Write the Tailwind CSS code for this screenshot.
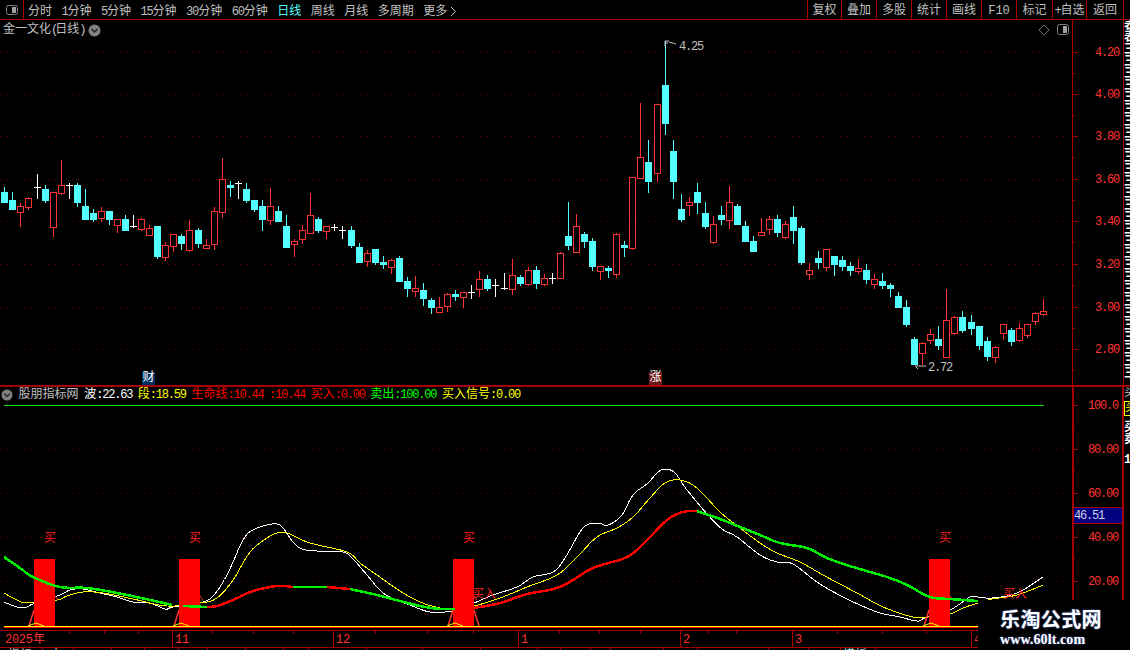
<!DOCTYPE html>
<html lang="zh-CN">
<head>
  <meta charset="UTF-8" />
  <title>金一文化(日线)</title>
  <script src="https://cdn.jsdelivr.net/npm/@tailwindcss/browser@4"></script>
</head>
<body class="bg-black">
  <div class="relative w-[1130px] h-[650px] overflow-hidden bg-black flex flex-col text-[12px] leading-[14px] text-[#c0c0c0] [font-family:'Liberation_Mono','Noto_Sans_CJK_SC',monospace]">

    <!-- 顶部周期栏 -->
    <div class="h-[20px] shrink-0 flex items-center border-b border-[#a80000]">
      <div class="w-[24px] h-full flex items-center justify-center border-r border-[#a80000]">
        <svg width="14" height="12" viewBox="0 0 14 12"><rect x="1.5" y="1.5" width="11" height="9" rx="2" fill="#000" stroke="#808080"/><rect x="7" y="3" width="4" height="6" fill="#a0a0a0"/></svg>
      </div>
      <div class="flex items-center gap-[9.5px] ml-[4px] translate-y-[2px]">
        <span>分时</span>
        <span><span class="tracking-[-1.2px]">1</span>分钟</span>
        <span><span class="tracking-[-1.2px]">5</span>分钟</span>
        <span><span class="tracking-[-1.2px]">15</span>分钟</span>
        <span><span class="tracking-[-1.2px]">30</span>分钟</span>
        <span><span class="tracking-[-1.2px]">60</span>分钟</span>
        <span class="text-[#54ffff]">日线</span>
        <span>周线</span>
        <span>月线</span>
        <span>多周期</span>
        <span class="flex items-center gap-[3px]">更多
          <svg width="7" height="11" viewBox="0 0 7 11" fill="none" stroke="#c0c0c0"><path d="M1 1l4.500 4.500L1 10"/></svg>
        </span>
      </div>
      <div class="ml-auto flex h-full mr-[6px] text-center">
        <div class="w-[34px] border-l border-[#a80000] leading-[23px]">复权</div>
        <div class="w-[35px] border-l border-[#a80000] leading-[23px]">叠加</div>
        <div class="w-[35px] border-l border-[#a80000] leading-[23px]">多股</div>
        <div class="w-[35px] border-l border-[#a80000] leading-[23px]">统计</div>
        <div class="w-[35px] border-l border-[#a80000] leading-[23px]">画线</div>
        <div class="w-[35px] border-l border-[#a80000] leading-[23px]">F10</div>
        <div class="w-[36px] border-l border-[#a80000] leading-[23px]">标记</div>
        <div class="w-[34px] border-l border-[#a80000] leading-[23px] whitespace-nowrap"><span class="tracking-[-1.2px]">+</span>自选</div>
        <div class="w-[38px] border-x border-[#a80000] leading-[23px]">返回</div>
      </div>
    </div>

    <!-- K线主图 -->
    <div class="h-[365px] shrink-0 flex">
      <div class="relative w-[1072px] shrink-0">
        <svg id="kline" class="absolute inset-0" width="1072" height="365" viewBox="0 20 1072 365"></svg>
        <div class="absolute left-[3px] top-[3px] flex items-center gap-[5px]">
          <span class="whitespace-nowrap">金一文化<span class="tracking-[-3px]">(</span>日线<span class="tracking-[-3px]">)</span></span>
          <svg width="13" height="13" viewBox="0 0 13 13"><circle cx="6.500" cy="6.500" r="6" fill="#808080"/><path d="M3.500 5l3 3 3-3" fill="none" stroke="#222" stroke-width="1.500"/></svg>
        </div>
        <svg class="absolute left-[1038px] top-[4px]" width="32" height="12" viewBox="0 0 32 12" fill="none">
          <path d="M6 1l5 5-5 5-5-5z" stroke="#707070"/>
          <rect x="19.500" y="0.500" width="11" height="10" rx="2" stroke="#808080"/>
          <rect x="25" y="2" width="4" height="7" fill="#a0a0a0"/>
        </svg>
        <div class="absolute left-[142px] top-[352px] w-[13px] h-[13px] bg-[#003060] text-white leading-[13px] text-center">财</div>
        <div class="absolute left-[649px] top-[352px] w-[13px] h-[13px] bg-[#701818] text-white leading-[13px] text-center">涨</div>
      </div>
      <div class="w-[51px] shrink-0 border-l border-[#a80000]">
        <svg id="axisTop" width="50" height="365" viewBox="1073 20 50 365"></svg>
      </div>
      <div class="w-[7px] shrink-0 border-l border-[#a80000] overflow-hidden text-white font-bold">
        <div class="h-[24px] border-b border-[#a80000] overflow-hidden leading-[12px] w-[12px]">表表</div>
        <div class="leading-[12px] w-[12px]">三三三三三三三三三三三三三三三三三三三三三三三三三三三三</div>
      </div>
    </div>

    <!-- 副图指标 -->
    <div class="h-[245px] shrink-0 flex border-t-2 border-[#a80000]">
      <div class="relative w-[1072px] shrink-0">
        <svg id="indicator" class="absolute inset-0" width="1072" height="243" viewBox="0 387 1072 243"></svg>
        <div class="absolute left-[1px] top-[1px] flex items-center gap-[5.6px] whitespace-nowrap">
          <svg width="12" height="12" viewBox="0 0 13 13"><circle cx="6.500" cy="6.500" r="6" fill="#808080"/><path d="M3.500 5l3 3 3-3" fill="none" stroke="#222" stroke-width="1.500"/></svg>
          <span>股朋指标网</span>
          <span class="text-white">波<span class="tracking-[-1.2px]">:22.63</span></span>
          <span class="text-[#ffff00]">段<span class="tracking-[-1.2px]">:18.59</span></span>
          <span class="text-[#ff0000]">生命线<span class="tracking-[-1.2px]">:10.44</span></span>
          <span class="text-[#ff0000] tracking-[-1.2px]">:10.44</span>
          <span class="text-[#ff0000]">买入<span class="tracking-[-1.2px]">:0.00</span></span>
          <span class="text-[#00ff00]">卖出<span class="tracking-[-1.2px]">:100.00</span></span>
          <span class="text-[#ffff00]">买入信号<span class="tracking-[-1.2px]">:0.00</span></span>
        </div>
      </div>
      <div class="w-[50px] shrink-0 border-l-2 border-[#a80000]">
        <svg id="axisBottom" width="48" height="243" viewBox="1074 387 48 243"></svg>
      </div>
      <div class="w-[8px] shrink-0 border-l-2 border-[#a80000] overflow-hidden leading-[12px]">
        <div class="w-[12px]">买</div>
        <div class="w-[12px] h-[15px] border border-[#ffff00] text-[#ffff00] mt-[2px]">买</div>
        <div class="w-[12px] text-white font-bold mt-[6px]">买卖</div>
        <div class="w-[12px] text-white font-bold mt-[8px]">18</div>
      </div>
    </div>

    <!-- 时间轴 -->
    <svg id="timeAxis" class="shrink-0" width="1130" height="20" viewBox="0 630 1130 20"></svg>

    <!-- 水印 -->
    <div class="absolute right-0 bottom-0 w-[152px] h-[50px] bg-black flex flex-col pl-[22px] pt-[7px] text-white whitespace-nowrap">
      <div class="text-[20px] leading-[24px] font-bold tracking-[0.4px] [font-family:'Noto_Sans_CJK_SC',sans-serif] [text-shadow:0_0_2px_#5070d0]">乐淘公式网</div>
      <div class="text-[14px] leading-[18px] font-bold tracking-[0.1px] [font-family:'Liberation_Serif',serif] [text-shadow:0_0_2px_#5070d0]">www.60lt.com</div>
    </div>
  </div>

  <script>
    const RED = "#ff3232", CYAN = "#54ffff", LINE = "#a80000", DOT = "#700000";
    const MONO = "font-family=\"'Liberation Mono',monospace\" font-size=\"12\" letter-spacing=\"-1.2\"";
    const CJK = "font-family=\"'Noto Sans CJK SC',sans-serif\" font-size=\"12\"";

    // 类型 c阳线实心 r空心 w十字, 上影 实体上 实体下 下影
    const candles = [
      ["c",187,192,202,202],["c",192,200,209,209],["r",203,206,212,226],["r",197,198,207,209],["w",174,187,187,198],
      ["c",185,189,200,202],["r",192,192,227,236],["r",160,185,193,194],["w",183,185,185,198],["c",183,185,202,206],
      ["c",189,206,219,219],["c",209,213,219,221],["r",207,211,218,221],["c",211,211,219,224],["r",219,219,225,232],
      ["c",215,219,230,230],["w",215,226,226,227],["r",218,219,229,230],["r",225,228,235,235],["c",226,226,256,258],
      ["r",242,245,257,260],["r",234,234,246,251],["c",234,236,243,249],["r",220,230,250,251],["c",228,230,243,247],
      ["r",239,245,248,248],["r",207,211,244,249],["r",158,179,212,217],["c",181,185,187,196],["w",181,183,183,198],
      ["c",183,189,200,202],["c",200,200,209,211],["c",200,206,219,230],["r",188,206,220,224],["c",206,211,221,221],
      ["c",215,226,247,247],["r",239,241,244,256],["r",225,230,239,243],["r",193,215,233,233],["c",217,219,230,232],
      ["r",226,226,231,238],["w",224,227,227,230],["w",226,230,230,238],["c",226,230,245,247],["c",243,247,262,262],
      ["r",250,253,261,266],["c",249,249,262,264],["c",256,262,264,268],["r",259,260,267,273],["c",256,258,281,281],
      ["c",277,281,288,296],["r",276,288,291,296],["c",283,290,298,305],["c",298,300,307,313],["r",297,307,312,312],
      ["r",293,294,306,311],["c",290,294,296,300],["r",292,292,297,307],["w",285,292,292,298],["r",271,279,289,296],
      ["c",275,279,288,290],["w",279,285,285,296],["w",273,288,288,289],["r",259,275,289,294],["c",275,277,283,285],
      ["r",267,270,284,285],["c",266,270,283,288],["r",274,278,284,285],["w",273,278,278,283],["r",252,253,278,278],
      ["c",202,236,245,249],["r",214,226,252,252],["c",232,234,241,247],["c",238,241,266,270],["r",266,266,271,279],
      ["c",266,268,270,277],["r",233,234,274,277],["c",241,245,247,256],["r",177,177,248,249],["r",103,157,178,178],
      ["c",140,162,181,192],["r",104,104,173,181],["c",41,85,123,134],["c",140,151,181,198],["c",194,209,219,221],
      ["r",197,202,205,215],["c",183,192,202,213],["c",202,213,226,228],["r",216,224,242,243],["c",206,215,219,224],
      ["r",186,202,220,228],["c",204,206,224,224],["c",221,226,241,241],["c",236,241,251,251],["r",218,232,235,235],
      ["r",216,219,229,234],["c",215,219,232,236],["r",221,224,237,238],["c",206,217,230,243],["c",226,228,262,264],
      ["r",263,270,274,279],["c",251,258,262,268],["r",249,249,267,270],["c",256,256,264,275],["c",256,260,266,270],
      ["c",262,266,270,275],["r",259,268,271,273],["c",264,270,279,283],["r",274,279,284,288],["c",273,281,285,288],
      ["c",283,285,288,296],["c",292,296,307,307],["c",300,307,324,326],["c",337,339,364,364],["r",342,343,353,364],
      ["r",329,334,340,343],["c",326,339,345,349],["r",289,320,357,357],["r",316,317,333,334],["c",311,317,330,332],
      ["c",315,322,328,334],["c",326,326,345,349],["c",337,341,356,360],["r",346,347,357,362],["r",324,324,333,339],
      ["c",328,330,341,345],["r",323,328,340,341],["r",324,324,335,337],["r",312,313,321,324],["r",299,311,314,315]
    ];

    function dotted(y) {
      return `<line x1="0" x2="1072" y1="${y + 0.5}" y2="${y + 0.5}" stroke="${DOT}" stroke-dasharray="1 5"/>`;
    }

    let k = "";
    [52, 94, 136, 179, 221, 264, 307, 349].forEach(y => k += dotted(y));
    candles.forEach((c, i) => {
      const x = Math.round(4.3 + 8.052 * i);
      const [t, hi, top, bot, lo] = c;
      const col = t === "r" ? RED : t === "w" ? "#ffffff" : CYAN;
      k += `<rect x="${x}" y="${hi}" width="1" height="${lo - hi + 1}" fill="${col}"/>`;
      if (t === "c") k += `<rect x="${x - 3}" y="${top}" width="7" height="${bot - top + 1}" fill="${col}"/>`;
      if (t === "r") k += `<rect x="${x - 2.5}" y="${top + 0.5}" width="6" height="${bot - top}" fill="#000" stroke="${col}"/>`;
      if (t === "w") k += `<rect x="${x - 3}" y="${top}" width="7" height="1" fill="${col}"/>`;
    });
    k += `<path d="M665 46V41h4M665 43h3M669 42l7 2" fill="none" stroke="#c0c0c0"/>`;
    k += `<text x="679" y="50" fill="#c0c0c0" ${MONO}>4.25</text>`;
    k += `<path d="M926 366H915l3 3" fill="none" stroke="#c0c0c0"/>`;
    k += `<text x="928" y="371" fill="#c0c0c0" ${MONO}>2.72</text>`;
    document.getElementById("kline").innerHTML = k;

    let a = "";
    [["4.20",52],["4.00",94],["3.80",136],["3.60",179],["3.40",221],["3.20",264],["3.00",307],["2.80",349]].forEach(([t, y]) => {
      a += `<rect x="1073" y="${y}" width="5" height="1" fill="${LINE}"/>`;
      a += `<rect x="1073" y="${y + 21}" width="2" height="1" fill="${LINE}"/>`;
      a += `<text x="1095" y="${y + 4}" fill="${RED}" ${MONO}>${t}</text>`;
    });
    document.getElementById("axisTop").innerHTML = a;

    const white = [[4,602],[17,607],[27,607],[33,604],[60,595],[70,590],[83,589],[100,593],[117,597],[133,602],[150,603],[165,609],[173,607],[200,603],[213,596],[227,575],[243,540],[253,530],[267,525],[277,524],[283,528],[293,542],[302,549],[317,551],[343,552],[353,559],[367,575],[383,593],[400,601],[410,605],[430,612],[452,611],[474,603],[493,595],[517,587],[533,577],[553,572],[565,558],[583,528],[597,523],[608,525],[622,515],[633,495],[648,483],[657,473],[665,469],[675,473],[687,490],[708,515],[722,529],[737,537],[760,555],[777,562],[793,564],[817,582],[843,597],[877,612],[900,617],[917,621],[925,618],[950,610],[970,597],[978,597],[992,598],[1017,593],[1043,577]];
    const yellow = [[4,593],[17,600],[28,603],[57,600],[67,596],[83,592],[103,593],[133,599],[167,606],[200,603],[217,598],[233,580],[250,552],[267,538],[277,533],[287,533],[310,543],[347,552],[360,563],[377,575],[400,591],[420,602],[440,608],[453,609],[474,606],[500,598],[527,587],[557,575],[577,557],[597,537],[617,528],[633,517],[650,498],[665,483],[680,480],[697,488],[720,512],[740,528],[760,543],[777,553],[800,562],[823,575],[857,593],[883,607],[913,617],[927,617],[950,614],[963,608],[978,603],[992,599],[1017,595],[1043,585]];
    const lifeSegs = [
      ["#00f000",[[4,557],[20,568],[33,577],[60,587],[87,588],[117,593],[150,600],[172,605]]],
      ["#00f000",[[183,606],[207,607]]],
      ["#ff0000",[[207,607],[217,606],[233,600],[253,591],[277,586],[293,587]]],
      ["#00f000",[[293,587],[327,587]]],
      ["#ff0000",[[327,587],[350,589]]],
      ["#00f000",[[350,589],[377,595],[400,601],[420,606],[440,609],[455,609]]],
      ["#ff0000",[[474,608],[500,603],[527,594],[560,587],[593,568],[627,557],[647,540],[667,520],[683,512],[697,511]]],
      ["#00f000",[[697,511],[720,519],[740,527],[760,535],[780,543],[807,548],[827,558],[853,567],[887,577],[907,585],[930,597],[950,599],[978,601]]]
    ];

    // 曲线平滑: Catmull-Rom 取样
    function smooth(p) {
      if (p.length < 3) return p.map(q => q.join(",")).join(" ");
      const out = [];
      for (let i = 0; i < p.length - 1; i++) {
        const p0 = p[i - 1] || p[i], p1 = p[i], p2 = p[i + 1], p3 = p[i + 2] || p2;
        for (let j = 0; j < 6; j++) {
          const t = j / 6, t2 = t * t, t3 = t2 * t;
          const f = n => 0.5 * (2 * p1[n] + (p2[n] - p0[n]) * t + (2 * p0[n] - 5 * p1[n] + 4 * p2[n] - p3[n]) * t2 + (3 * p1[n] - p0[n] - 3 * p2[n] + p3[n]) * t3);
          out.push(f(0).toFixed(1) + "," + f(1).toFixed(1));
        }
      }
      out.push(p[p.length - 1].join(","));
      return out.join(" ");
    }

    let s = "";
    [449, 493, 537, 581].forEach(y => s += dotted(y));
    s += `<rect x="4" y="405" width="1040" height="1" fill="#00e000"/>`;
    s += `<polyline points="${smooth(white)}" fill="none" stroke="#ffffff" shape-rendering="crispEdges"/>`;
    s += `<polyline points="${smooth(yellow)}" fill="none" stroke="#ffff00" shape-rendering="crispEdges"/>`;
    // 买入柱和信号线
    [34, 179, 453, 929].forEach(x => {
      s += `<rect x="${x}" y="559" width="21" height="67" fill="#ff0000"/>`;
      s += `<polyline points="${x - 5},626 ${x},610" fill="none" stroke="${RED}" stroke-width="1.500"/>`;
      s += `<polyline points="${x + 21},596 ${x + 24},600" fill="none" stroke="${RED}"/>`;
      s += `<text x="${x + 10}" y="542" fill="#ff2020" ${CJK}>买</text>`;
    });
    lifeSegs.forEach(([c, p]) => s += `<polyline points="${smooth(p)}" fill="none" stroke="${c}" stroke-width="2.5" shape-rendering="crispEdges"/>`);
    s += `<polyline points="474,610 479,626" fill="none" stroke="${RED}" stroke-width="1.500"/>`;
    s += `<text x="472" y="598" fill="#ff2020" ${CJK}>买入</text>`;
    s += `<text x="1003" y="598" fill="#ff2020" ${CJK}>买入</text>`;
    s += `<rect x="4" y="627" width="1068" height="1" fill="#ff0000"/>`;
    s += `<rect x="4" y="626" width="1068" height="1" fill="#ffff00"/>`;
    [34, 179, 453, 929].forEach(x => s += `<polyline points="${x - 6},626 ${x + 2},623 ${x + 10},626" fill="none" stroke="#ffff00"/>`);
    document.getElementById("indicator").innerHTML = s;

    let b = "";
    [["100.0",405],["80.00",449],["60.00",493],["40.00",537],["20.00",581]].forEach(([t, y]) => {
      b += `<rect x="1074" y="${y}" width="4" height="1" fill="${LINE}"/>`;
      b += `<rect x="1074" y="${y + 22}" width="1" height="1" fill="${LINE}"/>`;
      b += `<text x="1088" y="${y + 4}" fill="${RED}" ${MONO}>${t}</text>`;
    });
    b += `<rect x="1074" y="507" width="48" height="16" fill="#000080"/>`;
    b += `<rect x="1074" y="507" width="48" height="1" fill="${LINE}"/><rect x="1074" y="523" width="48" height="1" fill="${LINE}"/>`;
    b += `<text x="1074" y="519" fill="#d0d0e8" ${MONO}>46.51</text>`;
    document.getElementById("axisBottom").innerHTML = b;

    const TIME = "font-family=\"'Liberation Mono',monospace\" font-size=\"12\" letter-spacing=\"-0.3\"";
    let t = `<rect x="0" y="630" width="1130" height="1" fill="${LINE}"/><rect x="0" y="647" width="1130" height="1" fill="${LINE}"/>`;
    [["2025",5,0],["11",172,1],["12",333,1],["1",518,1],["2",680,1],["3",792,1],["4",971,1]].forEach(([label, x, line]) => {
      if (line) t += `<rect x="${x}" y="630" width="1" height="17" fill="${LINE}"/>`;
      t += `<text x="${x + (line ? 3 : 0)}" y="643" fill="${RED}" ${TIME}>${label}</text>`;
    });
    t += `<text x="33" y="643" fill="${RED}" ${CJK}>年</text>`;
    [69,104,138,212,253,293,375,427,473,559,599,640,708,736,837,882,926].forEach(x => t += `<rect x="${x}" y="631" width="1" height="3" fill="${LINE}"/>`);
    [42,73,111,144,178,207,245,283,308,366,422,480,537,560,590,610,663,697,768,808,840,875].forEach(x => t += `<rect x="${x}" y="648" width="1" height="2" fill="${LINE}"/>`);
    t += `<text x="8" y="659" fill="#c0c0c0" ${CJK}>指标</text><text x="50" y="659" fill="#c0c0c0" ${CJK}>十</text>`;
    t += `<text x="843" y="659" fill="#a0e0e0" ${CJK}>模板</text>`;
    document.getElementById("timeAxis").innerHTML = t;
  </script>
</body>
</html>
